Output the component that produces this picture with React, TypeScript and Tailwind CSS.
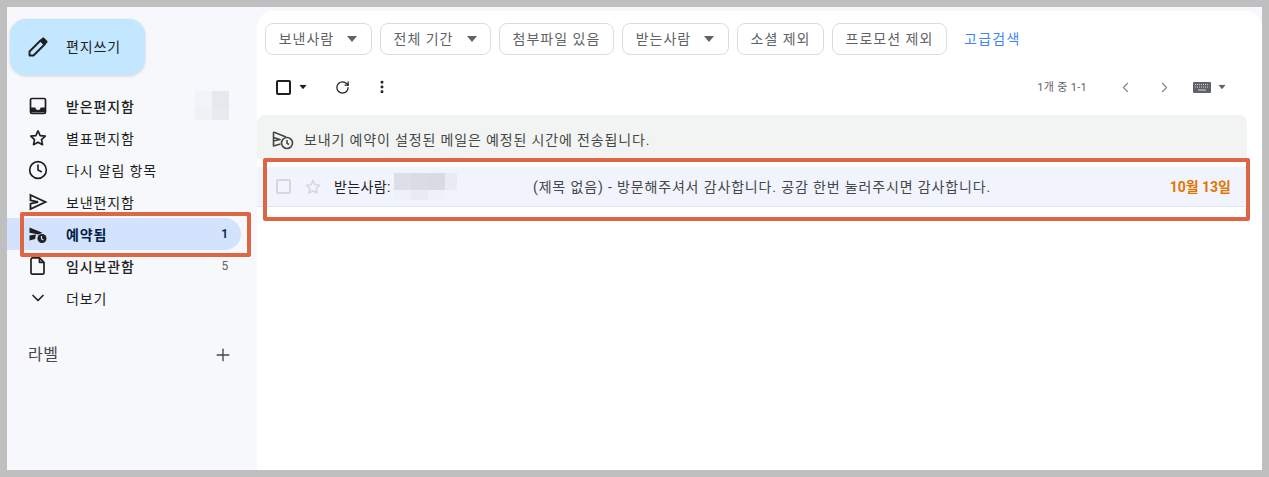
import { Plus, ChevronDown, ChevronLeft, ChevronRight, RotateCw, EllipsisVertical, Clock } from "lucide-react"

const font = "font-['Roboto','Noto_Sans_CJK_KR',sans-serif]"

const Caret = ({ className = "" }: { className?: string }) => (
  <svg width="12" height="6" viewBox="0 0 12 6" className={className}>
    <path d="M1 0h10L6 6z" fill="currentColor" />
  </svg>
)

const Pencil = () => (
  <svg width="20" height="20" viewBox="0 0 20 20">
    <path d="M1.500 18.500v-4L12.500 3.500l4 4L5.500 18.500z" fill="none" stroke="#1f1f1f" strokeWidth="1.900" strokeLinejoin="round" />
    <path d="M11.800 3.200l2.400-2.300c.6-.6 1.500-.6 2.100 0l2.800 2.800c.6.6.6 1.500 0 2.100l-2.300 2.400z" fill="#1f1f1f" />
  </svg>
)

const InboxIcon = () => (
  <svg width="20" height="20" viewBox="0 0 20 20">
    <path d="M4 2.500h12A1.500 1.500 0 0 1 17.500 4v12a1.500 1.500 0 0 1-1.500 1.500H4A1.500 1.500 0 0 1 2.500 16V4A1.500 1.500 0 0 1 4 2.500z" fill="none" stroke="#1f1f1f" strokeWidth="1.700" />
    <path d="M3 11.500h4.500a2.500 2.500 0 0 0 5 0H17V16.500H3z" fill="#1f1f1f" />
  </svg>
)

const StarIcon = ({ color = "#1f1f1f", size = 20 }: { color?: string; size?: number }) => (
  <svg width={size} height={size} viewBox="0 0 24 24" fill="none" stroke={color} strokeWidth="2" strokeLinejoin="round">
    <path d="M12 3.500l2.600 5.600 6.100.7-4.500 4.200 1.200 6-5.400-3-5.400 3 1.200-6-4.500-4.200 6.100-.7z" />
  </svg>
)

const SendIcon = ({ color = "#1f1f1f" }: { color?: string }) => (
  <svg width="20" height="20" viewBox="0 0 20 20" fill="none" stroke={color} strokeWidth="1.800" strokeLinejoin="miter">
    <path d="M2.500 3L17.500 10 2.500 17v-5.300L10 10 2.500 8.300z" />
  </svg>
)

const ScheduledIcon = () => (
  <svg width="20" height="20" viewBox="0 0 20 20" fill="#1f1f1f">
    <path d="M1.500 3.500l13 5.300-4 1.700-9-1.700zM1.500 16.500v-5l6.500-1-1 4.500z" />
    <circle cx="14" cy="14.500" r="4.500" />
    <path d="M13.500 12v3l2 1" stroke="#d3e3fd" strokeWidth="1.200" fill="none" />
  </svg>
)

const DraftIcon = () => (
  <svg width="20" height="20" viewBox="0 0 20 20" fill="none" stroke="#1f1f1f" strokeWidth="1.700" strokeLinejoin="round">
    <path d="M4.500 1.800h7l4.500 4.500v10.400a1.500 1.500 0 0 1-1.500 1.500h-10A1.500 1.500 0 0 1 3 16.700V3.300a1.500 1.500 0 0 1 1.500-1.500z" />
    <path d="M11.500 1.800v4.500H16" />
  </svg>
)

const KeyboardIcon = () => (
  <svg width="18" height="11" viewBox="0 0 18 11">
    <rect width="18" height="11" rx="1" fill="#5f6368" />
    <path d="M2 2.500h14M2 5h14" stroke="#d5d7da" strokeWidth="1" strokeDasharray="1 1" />
    <path d="M5 8h8" stroke="#d5d7da" strokeWidth="1" />
  </svg>
)

const BannerIcon = () => (
  <svg width="22" height="20" viewBox="0 0 22 20" fill="none" stroke="#444746" strokeWidth="1.600" strokeLinejoin="round">
    <path d="M1.500 2L14 7M1.500 2v14l7-2M1.500 7.500L8 9.500 1.500 11" />
    <circle cx="15" cy="13" r="5.500" />
    <path d="M15 10v3.300l2 1.200" />
  </svg>
)

const Mosaic = ({ cols, rows, tiles }: { cols: string; rows: string; tiles: string[] }) => (
  <div className={`grid ${cols} ${rows}`}>
    {tiles.map((c, i) => (
      <div key={i} style={{ background: c }} />
    ))}
  </div>
)

const navItems = [
  { label: "받은편지함", icon: <InboxIcon />, bold: true },
  { label: "별표편지함", icon: <StarIcon /> },
  { label: "다시 알림 항목", icon: <Clock size={20} strokeWidth={2} color="#1f1f1f" /> },
  { label: "보낸편지함", icon: <SendIcon /> },
  { label: "예약됨", icon: <ScheduledIcon />, count: "1", active: true },
  { label: "임시보관함", icon: <DraftIcon />, count: "5", bold: true },
  { label: "더보기", icon: <ChevronDown size={20} strokeWidth={2} color="#1f1f1f" /> },
]

const chips = [
  { label: "보낸사람", w: "w-[107px]", caret: true },
  { label: "전체 기간", w: "w-[111px]", caret: true },
  { label: "첨부파일 있음", w: "w-[115px]" },
  { label: "받는사람", w: "w-[107px]", caret: true },
  { label: "소셜 제외", w: "w-[87px]" },
  { label: "프로모션 제외", w: "w-[115px]" },
]

export default function App() {
  return (
    <div className={`relative flex h-[477px] w-[1269px] overflow-hidden border-[7px] border-[#bfbfbf] bg-[#f6f8fc] text-[#1f1f1f] tracking-[0.85px] ${font}`}>
      {/* Sidebar */}
      <aside className="flex w-[250px] shrink-0 flex-col">
        <button className="ml-[3px] mt-[12px] flex h-[56px] w-[135px] items-center rounded-2xl bg-[#c2e7ff] pl-[18px] text-sm text-[#1f1f1f] shadow-[0_1px_3px_rgba(60,64,67,0.2)]">
          <Pencil />
          <span className="ml-[18px]">편지쓰기</span>
        </button>
        <nav className="mt-[15px] flex w-[234px] flex-col">
          {navItems.map((item) => (
            <div
              key={item.label}
              className={`flex h-[32px] items-center pl-[21px] pr-[12px] text-sm ${item.active ? "rounded-r-2xl bg-[#d3e3fd] font-semibold text-[#041e49]" : ""} ${item.bold ? "font-medium" : ""}`}
            >
              <span className="flex w-[38px] shrink-0">{item.icon}</span>
              <span className="pt-[1px]">{item.label}</span>
              {item.count && (
                <span className={`ml-auto text-xs ${item.active ? "font-semibold" : "font-normal text-[#5f6368]"}`}>{item.count}</span>
              )}
            </div>
          ))}
        </nav>
        <div className="ml-[21px] mt-[29px] flex w-[205px] items-center justify-between text-base tracking-[0.5px] text-[#444746]">
          <span>라벨</span>
          <Plus size={20} strokeWidth={1.6} color="#444746" />
        </div>
      </aside>

      {/* Main */}
      <main className="mt-[4px] flex min-w-0 flex-1 flex-col rounded-t-2xl bg-white">
        <div className="mt-[12px] flex items-center gap-2 pl-[8px]">
          {chips.map((chip) => (
            <div
              key={chip.label}
              className={`flex h-[32px] items-center justify-center gap-[12px] rounded-lg border border-[#dadce0] text-sm tracking-[1px] text-[#5f6368] ${chip.w}`}
            >
              <span>{chip.label}</span>
              {chip.caret && <Caret className="text-[#5f6368]" />}
            </div>
          ))}
          <span className="ml-[9px] text-sm tracking-[1.3px] text-[#4285f4]">고급검색</span>
        </div>

        <div className="mt-[16px] flex h-[32px] items-center pl-[19px] pr-[34px]">
          <div className="h-[15px] w-[15px] rounded-[2px] border-2 border-[#1f1f1f]" />
          <Caret className="ml-[6px] scale-75 text-[#1f1f1f]" />
          <RotateCw size={15} strokeWidth={2} className="ml-[26px]" color="#1f1f1f" />
          <EllipsisVertical size={16} strokeWidth={2.4} className="ml-[24px]" color="#1f1f1f" />
          <span className="ml-auto mt-[2px] text-[11px] tracking-[0.3px] text-[#5f6368]">1개 중 1-1</span>
          <ChevronLeft size={17} strokeWidth={1.5} className="ml-[30px]" color="#80868b" />
          <ChevronRight size={17} strokeWidth={1.5} className="ml-[22px]" color="#80868b" />
          <span className="ml-[20px]"><KeyboardIcon /></span>
          <Caret className="ml-[5px] scale-75 text-[#5f6368]" />
        </div>

        <div className="mr-[15px] mt-[12px] flex h-[44px] items-center rounded-t-lg bg-[#f2f4f3] pl-[15px] pt-[6px] text-sm text-[#444746]">
          <BannerIcon />
          <span className="ml-[10px]">보내기 예약이 설정된 메일은 예정된 시간에 전송됩니다.</span>
        </div>

        <div className="mr-[15px] mt-[8px] flex h-[40px] items-center border-b border-[#dfe5f0] bg-[#f1f4fd] pl-[19px] pr-[16px] text-sm">
          <div className="h-[15px] w-[15px] rounded-[2px] border-2 border-[#d5d7da]" />
          <span className="ml-[13px]"><StarIcon color="#d5d7da" size={18} /></span>
          <span className="ml-[12px] w-[60px] shrink-0 tracking-[0.4px]">받는사람:</span>
          <Mosaic
            cols="grid-cols-[17px_17px_17px_12px]"
            rows="grid-rows-[17px_10px]"
            tiles={["#dcdfe7", "#d9dce4", "#d8dbe3", "#e9ebf3", "#eef1f8", "#e8ebf3", "#eef1f8", "#f0f3fa"]}
          />
          <span className="ml-[76px] text-[#444746]">(제목 없음) - 방문해주셔서 감사합니다. 공감 한번 눌러주시면 감사합니다.</span>
          <span className="ml-auto font-bold tracking-normal text-[#e37400]">10월 13일</span>
        </div>
      </main>

      {/* Sidebar mosaic */}
      <div className="absolute left-[188px] top-[84px]">
        <Mosaic
          cols="grid-cols-[17px_17px]"
          rows="grid-rows-[17px_12px]"
          tiles={["#f1f3f8", "#e6e8ed", "#eff1f5", "#e8eaef"]}
        />
      </div>

      {/* Annotation boxes */}
      <div className="absolute left-[13px] top-[205px] h-[45px] w-[231px] rounded-[2px] border-4 border-[#dd6644]" />
      <div className="absolute left-[256px] top-[151px] h-[63px] w-[987px] rounded-[2px] border-4 border-[#dd6644]" />
    </div>
  )
}
